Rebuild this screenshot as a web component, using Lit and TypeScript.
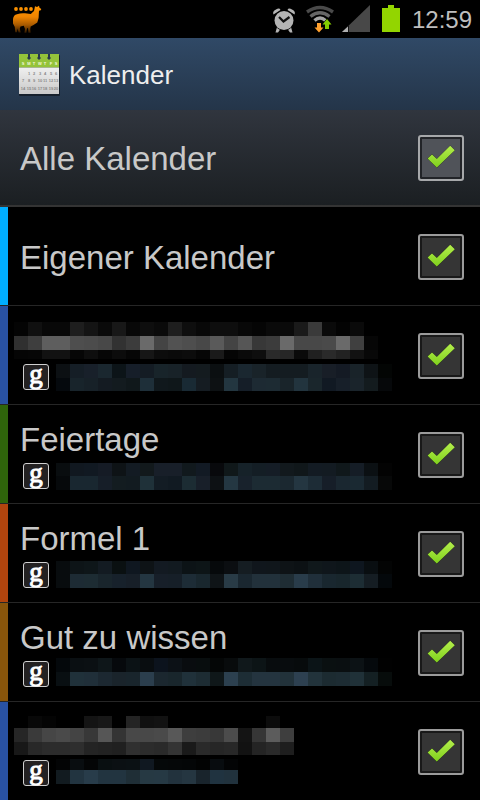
import { LitElement, html, svg, css, nothing } from "lit";
import { customElement, property } from "lit/decorators.js";

interface Band {
  top: number;
  height: number;
  cells: string;
}

interface CalendarEntry {
  name?: string;
  color: string;
  nameBands?: Band[];
  accountBands?: Band[];
}

const CELL = 14;

const calendars: CalendarEntry[] = [
  { name: "Eigener Kalender", color: "#00aeff" },
  {
    color: "#2952a3",
    nameBands: [
      { top: 0, height: 14, cells: "04 10 08 08 1e 14 0a 18 08 0e 0a 1e 0e 08 0e 0e 08 05 0a 0a 1a 3a 0a 03 0a" },
      { top: 14, height: 14, cells: "30 3e 5e 5e 4e 4c 48 32 3c 6a 44 52 4e 48 5a 44 56 38 3c 6a 48 48 4a 6a 40 06" },
      { top: 28, height: 9, cells: "05 06 12 12 06 0e 06 0c 06 16 0c 0a 0c 06 1a 05 0a 0e 2a 26 0a 20 2a 22 12 08" },
    ],
    accountBands: [
      { top: 0, height: 14, cells: "0c1013 151e26 18202a 1a272f 0c1418 161e29 141c24 18242a 182228 141a20 141b1f 0b0f11 151e24 1a2730 192329 141c21 141c21 141c21 19242b 181e27 141a24 192329 0e1316 030504" },
      { top: 14, height: 13, cells: "05090d 18242b 172128 141b22 131b1f 10181b 1e2f39 10181c 0f171a 192a34 151c22 0d1113 233640 151e28 1d2a33 1d2b33 19242a 22343e 1a262c 111923 171f29 1a242b 131b1e 06080a" },
    ],
  },
  {
    name: "Feiertage",
    color: "#2f650b",
    accountBands: [
      { top: 0, height: 13, cells: "090d0f 111820 111922 151b25 0e1316 131b23 12191c 181f29 181f29 11191d 121a24 08090c 10181a 162229 141e25 151d26 12191d 10171a 131b23 131b22 10181b 151d26 0b1013 030303" },
      { top: 13, height: 14, cells: "06090b 192730 192730 161e28 131c20 121b20 1f3139 131c24 111a22 1c2c33 181f29 0d1114 243742 18222c 1c2b33 1c2b33 1b2830 243641 1d2c36 161e28 1a2730 1a2932 131c22 070808" },
    ],
  },
  {
    name: "Formel 1",
    color: "#b1440e",
    accountBands: [
      { top: -1, height: 13, cells: "080c0e 0d1417 0e1619 131b22 0a1011 0f1720 0e1316 131a22 121a20 0c1316 0d1517 06090b 0b0e11 151d22 10161c 10161b 0e1316 0c1114 10181b 0f161b 0d1519 0e161f 090e11 030404" },
      { top: 12, height: 14, cells: "080c0e 1d2b34 1d2c33 19252c 17212b 171f28 243641 171f29 161f28 1d2c36 19272e 0f1417 293b46 1a2730 22313b 22313b 1f2d34 293c4a 202f3a 19272f 18262c 1d2d34 151d23 04080b" },
    ],
  },
  {
    name: "Gut zu wissen",
    color: "#88550b",
    accountBands: [
      { top: -3, height: 14, cells: "04080b 0a0f12 0b1013 0e1619 06090c 0b1215 090d10 0c131d 0c1116 090c0f 080d0e 040606 080b0c 10181b 0c1416 080c0e 080c0e 070b0c 0b1417 0a1011 0a0f11 0c1215 05090c 010101" },
      { top: 11, height: 14, cells: "090f12 20313a 202f39 1c2831 1a242b 19252c 2b3e4d 1b272f 19262c 20313a 1d2c33 0f1719 2c404f 1d2d35 24343f 24343f 22323a 2d4050 22333b 1c2b31 1d2c33 203138 142023 070c0b" },
    ],
  },
  {
    color: "#2952a3",
    nameBands: [
      { top: -2, height: 12, cells: "00 08 04 00 00 14 18 00 24 10 12 00 00 00 00 00 00 00 0c 00" },
      { top: 10, height: 14, cells: "26 3a 46 4a 44 38 56 34 48 48 4a 58 3e 3c 38 4c 14 36 5c 3e" },
      { top: 24, height: 13, cells: "18 28 2c 2c 2e 24 22 20 30 2c 2a 34 1a 2a 26 28 12 24 2a 1e" },
    ],
    accountBands: [
      { top: -1, height: 11, cells: "030405 090d10 040506 090f11 0b1013 0b1114 101821 050809 050708 040607 020303 080c0f 030405" },
      { top: 10, height: 14, cells: "121b20 223440 283c4a 223440 223440 1f2e36 263943 263944 22323d 253641 19242c 203340 21323d" },
    ],
  },
];

@customElement("pixel-strip")
class PixelStrip extends LitElement {
  @property({ attribute: false }) bands: Band[] = [];
  @property({ type: Number }) height = 28;

  static styles = css`
    :host { display: block; }
    svg { display: block; overflow: visible; }
  `;

  render() {
    const rows = this.bands.map((band) => ({ ...band, list: band.cells.split(" ") }));
    const width = Math.max(...rows.map((row) => row.list.length)) * CELL;
    return html`<svg width=${width} height=${this.height} shape-rendering="crispEdges" aria-hidden="true">
      ${rows.map((row) =>
        row.list.map((cell, i) => {
          const fill = cell.length === 2 ? `#${cell}${cell}${cell}` : `#${cell}`;
          return svg`<rect x=${i * CELL} y=${row.top} width=${CELL} height=${row.height} fill=${fill}></rect>`;
        })
      )}
    </svg>`;
  }
}

@customElement("check-box")
class CheckBox extends LitElement {
  @property() label = "";
  @property({ type: Boolean }) light = false;

  static styles = css`
    :host { display: block; }
    .box { display: grid; width: 46px; height: 46px; }
    .input, .mark { grid-area: 1 / 1; }
    .input {
      appearance: none;
      box-sizing: border-box;
      width: 46px;
      height: 46px;
      margin: 0;
      border: 2px solid #9b9b9b;
      border-radius: 3px;
      background: #353535;
      box-shadow: inset 0 0 0 2px #191919;
    }
    .light { border-color: #a6a8aa; background: #505359; box-shadow: inset 0 0 0 2px #222428; }
    .mark { visibility: hidden; pointer-events: none; }
    .input:checked + .mark { visibility: visible; }
  `;

  render() {
    return html`<label class="box">
      <input class="input ${this.light ? "light" : ""}" type="checkbox" checked aria-label=${this.label} />
      <svg class="mark" width="46" height="46" viewBox="0 0 46 46" aria-hidden="true">
        <defs>
          <linearGradient id="leaf" x1="0" y1="0" x2="0" y2="1">
            <stop offset="0" stop-color="#b4ee4c"></stop>
            <stop offset="1" stop-color="#7fd01c"></stop>
          </linearGradient>
        </defs>
        <path d="M9.6 23.4 14 19.4 18.800 24 32.200 10.800 36.800 15.200 18.800 32.600Z" fill="url(#leaf)" stroke="#1c2410" stroke-opacity=".6" stroke-width="1" stroke-linejoin="round" paint-order="stroke"></path>
      </svg>
    </label>`;
  }
}

@customElement("status-bar")
class StatusBar extends LitElement {
  static styles = css`
    :host {
      display: flex;
      align-items: center;
      box-sizing: border-box;
      height: 38px;
      padding: 2px 8px 0 12px;
      background: #000;
    }
    .spacer { flex: 1; }
    .icons { display: flex; gap: 8px; margin-right: 6px; }
    .icon { display: block; }
    .clock { color: #bebebe; font-size: 24px; line-height: 36px; }
  `;

  render() {
    return html`
      <svg class="icon" width="30" height="32" viewBox="0 0 30 32" aria-hidden="true">
        <defs>
          <linearGradient id="fur" gradientUnits="userSpaceOnUse" x1="0" y1="2" x2="0" y2="29">
            <stop offset="0" stop-color="#ff9500"></stop>
            <stop offset=".4" stop-color="#f08400"></stop>
            <stop offset=".7" stop-color="#a85a00"></stop>
            <stop offset="1" stop-color="#2c1700"></stop>
          </linearGradient>
        </defs>
        <g fill="url(#fur)">
          <circle cx="4" cy="5" r="1.900"></circle>
          <circle cx="9" cy="5" r="1.900"></circle>
          <circle cx="14" cy="5" r="1.900"></circle>
          <circle cx="19" cy="5" r="1.900"></circle>
          <path d="M23 2.300 25 3 27 1.800 27.500 3.800 29.300 5 28.800 6.300 27 6.800 26.600 14 25.300 18.500 21.500 21 18.700 22.500 18.200 25 18.600 28.700H16.400L16 24 15 24.500 14.400 28.700H12.400L13 25 11.800 21.800 8.500 22.500 7.800 24.500 8.700 28.500H6.600L5.500 24.500 5 28.300H3.200L2.800 23 1 19.500 1 15Q1.500 11 5 10.200 9 8.800 13 9.300L18.800 10 22 7Z"></path>
        </g>
      </svg>
      <span class="spacer"></span>
      <div class="icons">
        <svg class="icon" width="26" height="30" viewBox="0 0 26 30" aria-hidden="true">
          <g fill="#b4b4b4">
            <path d="M1.500 9.500Q0 6.500 4 4.500 7.500 2.500 8.500 5ZM22.500 9.500Q24 6.500 20 4.500 16.500 2.500 15.500 5Z"></path>
            <path d="M5 22 3.500 27.500H6L8.500 24ZM19 22 20.500 27.500H18L15.500 24Z"></path>
            <circle cx="12" cy="15.500" r="9.500" stroke="#000" stroke-width="1.500" paint-order="stroke"></circle>
          </g>
          <path d="M7 12 11.500 16.500 17.500 12" fill="none" stroke="#111" stroke-width="2.200"></path>
        </svg>
        <svg class="icon" width="28" height="30" viewBox="0 0 28 30" aria-hidden="true">
          <g fill="none" stroke-width="3.400">
            <path d="M1 7Q14 -2 27 7" stroke="#4a4a4a"></path>
            <path d="M4.500 11.500Q14 4 23.500 11.500" stroke="#666"></path>
            <path d="M8.500 15.500Q14 10.500 19.500 15.500" stroke="#a4a4a4"></path>
          </g>
          <path d="M11 18H15V22.500H17.500L13 27.500 8.500 22.500H11Z" fill="#ffa02e" stroke="#000" paint-order="stroke"></path>
          <path d="M19 24V19.500H16.500L21 14 25.500 19.500H23V24Z" fill="#85cc00" stroke="#000" paint-order="stroke"></path>
        </svg>
        <svg class="icon" width="28" height="30" viewBox="0 0 28 30" aria-hidden="true">
          <path d="M28 0V27H0Z" fill="#484848"></path>
          <path d="M6 21.500V27H0Z" fill="#b0b0b0"></path>
          <path d="M6.500 20V27" stroke="#111" fill="none"></path>
        </svg>
        <svg class="icon" width="28" height="30" viewBox="0 0 28 30" aria-hidden="true">
          <path d="M10 0H16V3H22V27H4V3H10Z" fill="#93d500"></path>
        </svg>
      </div>
      <time class="clock">12:59</time>
    `;
  }
}

@customElement("title-bar")
class TitleBar extends LitElement {
  static styles = css`
    :host {
      display: flex;
      align-items: center;
      gap: 9px;
      box-sizing: border-box;
      height: 72px;
      padding: 2px 0 0 19px;
      background: linear-gradient(#304966, #243549);
    }
    .icon { display: block; }
    .days { font-size: 4px; font-weight: 700; text-anchor: middle; }
    .title { margin: 0; color: #eee; font-size: 26px; font-weight: 400; line-height: 32px; }
  `;

  render() {
    const week = ["S M T W T F S", "- 1 2 3 4 5 6", "7 8 9 10 11 12 13", "14 15 16 17 18 19 20"];
    const lines = [11, 21, 28, 36];
    return html`
      <svg class="icon" width="41" height="42" viewBox="0 0 41 42" aria-hidden="true">
        <defs>
          <linearGradient id="paper" x1="0" y1="0" x2="0" y2="1">
            <stop offset="0" stop-color="#f0f0f0"></stop>
            <stop offset="1" stop-color="#c9c9c9"></stop>
          </linearGradient>
        </defs>
        <rect x="0" y="1" width="41" height="41" rx="1" fill="#16202c"></rect>
        <rect x="0" y="13" width="40" height="27" fill="url(#paper)"></rect>
        <rect x="0" y="0" width="40" height="14" fill="#94c33a"></rect>
        <rect x="0" y="13" width="40" height="1" fill="#a9b890"></rect>
        <path d="M9 0H11V3L12 4 10 6 8 4 9 3ZM19 0H21V3L22 4 20 6 18 4 19 3ZM29 0H31V3L32 4 30 6 28 4 29 3Z" fill="#28384c"></path>
        ${week.map((row, r) =>
          row.split(" ").map((day, c) =>
            day === "-"
              ? nothing
              : svg`<text class="days" x=${4 + Math.round(c * 5.5)} y=${lines[r]} fill=${r === 0 ? "#f2f8dc" : "#888"}>${day}</text>`
          )
        )}
      </svg>
      <h1 class="title">Kalender</h1>
    `;
  }
}

@customElement("calendar-row")
class CalendarRow extends LitElement {
  @property({ attribute: false }) entry!: CalendarEntry;

  static styles = css`
    :host {
      display: flex;
      box-sizing: border-box;
      height: 99px;
      border-bottom: 1px solid #262626;
      background: #000;
    }
    .stripe { width: 8px; flex: none; }
    .body {
      display: flex;
      flex: 1;
      align-items: center;
      justify-content: space-between;
      min-width: 0;
      padding: 2px 16px 0 12px;
    }
    .texts { display: flex; flex-direction: column; gap: 4px; min-width: 0; }
    .name { color: #c8c8c8; font-size: 33px; line-height: 38px; white-space: nowrap; }
    .single { padding-top: 2px; }
    .hidden-name { margin-left: -6px; }
    .account { display: flex; gap: 7px; height: 26px; padding-left: 3px; }
    .badge {
      flex: none;
      box-sizing: border-box;
      width: 26px;
      height: 26px;
      border: 1px solid #d0d0d0;
      border-radius: 3px;
      background: #232122;
      color: #fff;
      font: 400 27px/18px "Liberation Serif", serif;
      text-align: center;
      -webkit-text-stroke: 1px #fff;
    }
    .check { flex: none; }
  `;

  render() {
    const { name, color, nameBands, accountBands } = this.entry;
    return html`
      <div class="stripe" style="background:${color}"></div>
      <div class="body">
        <div class="texts">
          ${name
            ? html`<div class="name ${accountBands ? "" : "single"}">${name}</div>`
            : html`<pixel-strip class="hidden-name" .bands=${nameBands ?? []} .height=${38}></pixel-strip>`}
          ${accountBands
            ? html`<div class="account">
                <div class="badge">g</div>
                <pixel-strip .bands=${accountBands} .height=${26}></pixel-strip>
              </div>`
            : nothing}
        </div>
        <check-box class="check" label=${name ?? "Kalender"}></check-box>
      </div>
    `;
  }
}

@customElement("app-root")
class AppRoot extends LitElement {
  static styles = css`
    :host {
      display: block;
      height: 100vh;
      overflow: hidden;
      background: #000;
      font-family: "Liberation Sans", Arial, sans-serif;
    }
    .all {
      display: flex;
      align-items: center;
      justify-content: space-between;
      box-sizing: border-box;
      height: 97px;
      padding: 1px 16px 0 20px;
      border-bottom: 2px solid #343434;
      background: linear-gradient(#30353e, #1b1f22);
      color: #c8c8c8;
      font-size: 33px;
      line-height: 38px;
    }
    .single { padding-top: 2px; }
    .list { margin: 0; padding: 0; list-style: none; }
  `;

  render() {
    return html`
      <status-bar></status-bar>
      <title-bar></title-bar>
      <div class="all">
        <span class="single">Alle Kalender</span>
        <check-box light label="Alle Kalender"></check-box>
      </div>
      <ul class="list">
        ${calendars.map((entry) => html`<li><calendar-row .entry=${entry}></calendar-row></li>`)}
      </ul>
    `;
  }
}
